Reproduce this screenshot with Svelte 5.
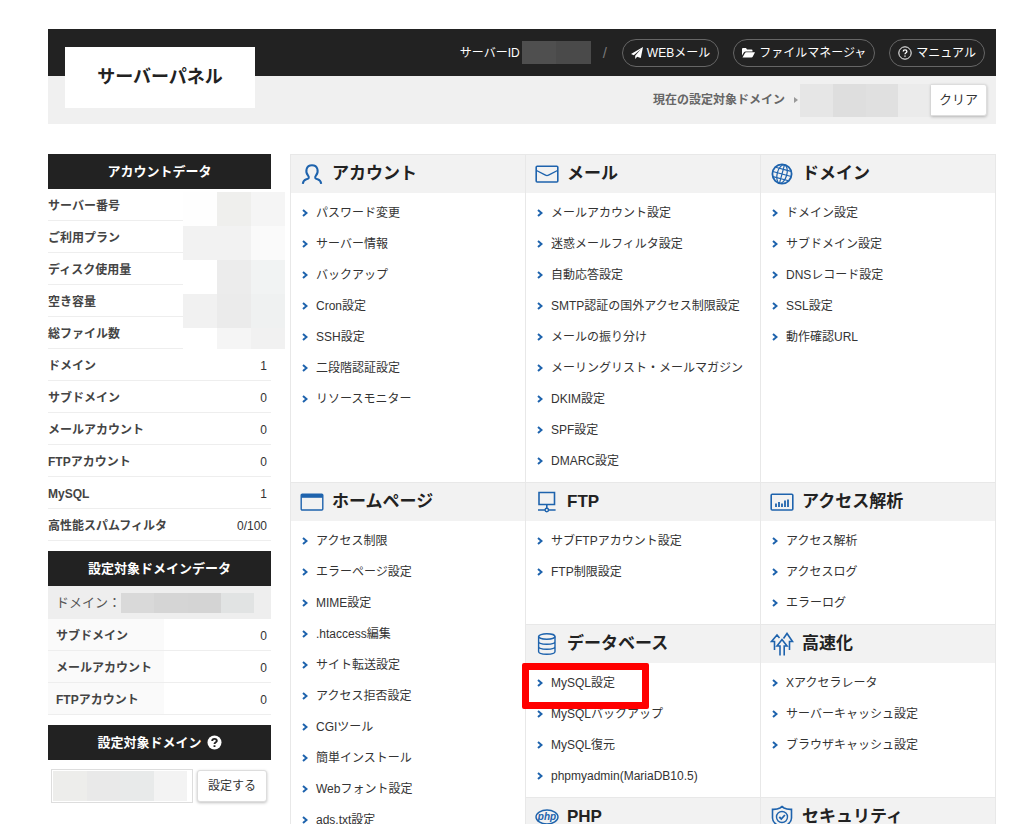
<script>
    const icons = {
        person: '<path d="M2.800 21.800c.3-2.600 1.300-3.800 3.600-4.500 2.400-.7 3.300-1.700 1.600-3.800C5 9.800 6 3.200 12 3.200s7 6.600 4 10.300c-1.700 2.100-.8 3.100 1.600 3.800 2.300.7 3.300 1.900 3.600 4.500" stroke-width="2"/>',
        mail: '<rect x="1.200" y="4.200" width="21.600" height="15.800" rx="1" stroke-width="1.600"/><path d="M1.500 8.500 10.500 13.200q1.500.8 3 0L22.500 8.500"/>',
        globe: '<circle cx="12" cy="12" r="9.600" stroke-width="1.800"/><g stroke-width="1.200" transform="rotate(15 12 12)"><ellipse cx="12" cy="12" rx="4.800" ry="9.500"/><path d="M12 2.500v19M2.500 12h19M4 7.200h16M4 16.800h16"/></g>',
        browser: '<rect x="1.200" y="4.200" width="21.600" height="15.800" rx="1"/><path d="M1.200 4.200h21.600v3.600H1.200z" fill="currentColor" stroke="none"/>',
        network: '<path d="M4 2.500h15.500v12H4zM11.800 14.500v4M3 20h7M13.600 20h7" stroke-width="1.600"/><circle cx="11.800" cy="20" r="1.700"/>',
        database: '<ellipse cx="11.800" cy="4.500" rx="8.200" ry="2.700"/><path d="M3.600 4.500v15c0 3.600 16.400 3.600 16.400 0v-15M3.600 9.500c0 3.600 16.400 3.600 16.400 0M3.600 14.500c0 3.600 16.400 3.600 16.400 0"/>',
        chart: '<rect x="1.200" y="4.200" width="21.600" height="15.800" rx="1" stroke-width="1.600"/><path d="M6 17v-3.500M9 17v-5M12 17v-3.500M15 17v-6.500M18 17v-7.500" stroke-width="1.800"/>',
        arrows: '<path d="M4.500 18V9.500H1.500L7 3l2.500 3M19.500 18V9.500h3L17 1.500l-3.500 5M10 23.500v-9.500H7L12 7.500l5 6.500h-2.800v9.500" stroke-width="1.600"/>',
        php: '<ellipse cx="12" cy="12" rx="11" ry="7"/><text x="12" y="15" text-anchor="middle" font-size="10" font-style="italic" font-weight="bold" fill="currentColor" stroke="none">php</text>',
        shield: '<path d="M12 1.500 14 3c2 1 4.500 1.500 7.500 1.300V13c0 4.500-4.500 7.500-9.500 9.500C7 20.500 2.500 17.500 2.500 13V4.300C5.500 4.500 8 4 10 3z" stroke-width="1.600"/><circle cx="12" cy="12" r="5.500"/><path d="m9.300 12 2 2 3.600-4" stroke-width="1.800"/>'
    };

    const accountData = [
        ['サーバー番号', ''],
        ['ご利用プラン', ''],
        ['ディスク使用量', ''],
        ['空き容量', ''],
        ['総ファイル数', ''],
        ['ドメイン', '1'],
        ['サブドメイン', '0'],
        ['メールアカウント', '0'],
        ['FTPアカウント', '0'],
        ['MySQL', '1'],
        ['高性能スパムフィルタ', '0/100']
    ];

    const domainData = [
        ['サブドメイン', '0'],
        ['メールアカウント', '0'],
        ['FTPアカウント', '0']
    ];

    const hiddenTiles = [
        '#fefefe', '#efefed', '#f5f5f5',
        '#f2f2f2', '#f2f2f2', '#fafafa',
        '#ffffff', '#ececec', '#f1f3f3',
        '#f1f1f1', '#ebebeb', '#eff1f1',
        '#ffffff', '#f5f5f5', '#f1f1f1'
    ];

    const panels = [
        { title: 'アカウント', icon: 'person', items: ['パスワード変更', 'サーバー情報', 'バックアップ', 'Cron設定', 'SSH設定', '二段階認証設定', 'リソースモニター'] },
        { title: 'メール', icon: 'mail', items: ['メールアカウント設定', '迷惑メールフィルタ設定', '自動応答設定', 'SMTP認証の国外アクセス制限設定', 'メールの振り分け', 'メーリングリスト・メールマガジン', 'DKIM設定', 'SPF設定', 'DMARC設定'] },
        { title: 'ドメイン', icon: 'globe', items: ['ドメイン設定', 'サブドメイン設定', 'DNSレコード設定', 'SSL設定', '動作確認URL'] },
        { title: 'ホームページ', icon: 'browser', tall: true, items: ['アクセス制限', 'エラーページ設定', 'MIME設定', '.htaccess編集', 'サイト転送設定', 'アクセス拒否設定', 'CGIツール', '簡単インストール', 'Webフォント設定', 'ads.txt設定'] },
        { title: 'FTP', icon: 'network', items: ['サブFTPアカウント設定', 'FTP制限設定'] },
        { title: 'アクセス解析', icon: 'chart', items: ['アクセス解析', 'アクセスログ', 'エラーログ'] },
        { title: 'データベース', icon: 'database', items: ['MySQL設定', 'MySQLバックアップ', 'MySQL復元', 'phpmyadmin(MariaDB10.5)'] },
        { title: '高速化', icon: 'arrows', items: ['Xアクセラレータ', 'サーバーキャッシュ設定', 'ブラウザキャッシュ設定'] },
        { title: 'PHP', icon: 'php', items: [] },
        { title: 'セキュリティ', icon: 'shield', items: [] }
    ];

    const marked = 'MySQL設定';
</script>

<div class="page">
    <header>
        <h1 class="logo">サーバーパネル</h1>
        <div class="topbar">
            <span class="server-id">サーバーID</span>
            <span class="mask id-mask"><i style="background: #4f4f4f"></i><i style="background: #4a4a4a"></i></span>
            <span class="slash">/</span>
            <nav>
                <a class="pill" href="#webmail">
                    <svg width="12" height="12" viewBox="0 0 12 12"><path d="M12 0 0 7l2.800 1.200L10 2 4.200 8.800V12l2-2.300L9.800 11z" fill="#fff" /></svg>
                    WEBメール
                </a>
                <a class="pill" href="#files">
                    <svg width="13" height="12" viewBox="0 0 13 12"><path d="M0 8.500V2q0-1 1-1h3l1 1.500h4.500q1 0 1 1v1H3.500q-1 0-1.500.8zM.5 10.500l2.500-4.500q.4-.7 1.200-.7H13l-2.300 4.500q-.4.7-1.200.7z" fill="#fff" /></svg>
                    ファイルマネージャ
                </a>
                <a class="pill" href="#manual">
                    <svg width="14" height="14" viewBox="0 0 14 14" fill="none" stroke="#fff"><circle cx="7" cy="7" r="6.200" /><path d="M5.200 5.600c0-2.300 3.700-2.300 3.700 0C8.900 6.800 7 6.900 7 8.300M7 9.400v1.400" stroke-width="1.300" /></svg>
                    マニュアル
                </a>
            </nav>
        </div>
        <div class="subbar">
            <span class="current">現在の設定対象ドメイン</span>
            <span class="arrow"></span>
            <span class="mask domain-mask">
                <i style="background: #e6e6e6"></i><i style="background: #dedede"></i><i style="background: #e0e0e0"></i><i style="background: #ebebeb"></i>
            </span>
            <button class="clear">クリア</button>
        </div>
    </header>

    <div class="content">
        <aside>
            <section class="account">
                <h2>アカウントデータ</h2>
                <table>
                    <tbody>
                        {#each accountData as [label, value]}
                        <tr><th scope="row">{label}</th><td>{value}</td></tr>
                        {/each}
                    </tbody>
                </table>
                <div class="tiles">
                    {#each hiddenTiles as color}
                    <i style="background: {color}"></i>
                    {/each}
                </div>
            </section>

            <section>
                <h2>設定対象ドメインデータ</h2>
                <p class="domain-name">
                    ドメイン：
                    <span class="mask name-mask">
                        <i style="background: #d9d9d9"></i><i style="background: #d5d5d5"></i><i style="background: #d4d4d4"></i><i style="background: #e1e3e3"></i>
                    </span>
                </p>
                <table class="shaded">
                    <tbody>
                        {#each domainData as [label, value]}
                        <tr><th scope="row">{label}</th><td>{value}</td></tr>
                        {/each}
                    </tbody>
                </table>
            </section>

            <section>
                <h2>
                    <label for="target">設定対象ドメイン</label>
                    <svg width="15" height="15" viewBox="0 0 15 15"><circle cx="7.500" cy="7.500" r="7" fill="#fff" /><path d="M5.200 6c0-2.900 4.600-2.900 4.600 0C9.800 7.300 7.500 7.300 7.500 9M7.500 10.200v1.900" fill="none" stroke="#222" stroke-width="1.900" /></svg>
                </h2>
                <form on:submit|preventDefault>
                    <div class="field">
                        <select id="target"><option></option></select>
                        <span class="mask field-mask">
                            <i style="background: #ededeb"></i><i style="background: #e9e9e9"></i><i style="background: #e8eaea"></i><i style="background: #f3f3f3"></i>
                        </span>
                    </div>
                    <button>設定する</button>
                </form>
            </section>
        </aside>

        <main>
            {#each panels as panel}
            <section class="panel" class:tall={panel.tall}>
                <h3>
                    <svg width="24" height="24" viewBox="0 0 24 24">{@html icons[panel.icon]}</svg>
                    {panel.title}
                </h3>
                <ul>
                    {#each panel.items as item}
                    <li class:marked={item == marked}>
                        <svg width="6" height="8" viewBox="0 0 6 8"><path d="m1 1 3.500 3L1 7" /></svg>
                        <a href="#{item}">{item}</a>
                    </li>
                    {/each}
                </ul>
            </section>
            {/each}
        </main>
    </div>
</div>

<style>
    :global(body) {
        margin: 0;
        height: 100vh;
        overflow: hidden;
        background: #fff;
    }

    .page {
        padding: 29px 28px 0 48px;
        font-family: "Liberation Sans", "Noto Sans CJK JP", sans-serif;
        font-size: 12px;
        color: #333;
    }

    h1, h2, h3, ul, p {
        margin: 0;
        padding: 0;
    }

    a {
        color: inherit;
        text-decoration: none;
    }

    button {
        height: 32px;
        box-sizing: border-box;
        border: 1px solid #ddd;
        border-radius: 3px;
        background: #fff;
        box-shadow: 0 1px 3px rgba(0, 0, 0, 0.25);
        color: #333;
        font: inherit;
        line-height: 18px;
        padding: 0;
        white-space: nowrap;
    }

    header {
        position: relative;
    }

    .logo {
        position: absolute;
        left: 17px;
        top: 18px;
        width: 190px;
        line-height: 61px;
        background: #fff;
        color: #222;
        text-align: center;
        font-size: 18px;
        font-weight: bold;
    }

    .topbar, .subbar {
        display: flex;
        align-items: center;
        justify-content: flex-end;
        box-sizing: border-box;
        line-height: 18px;
    }

    .topbar {
        height: 47px;
        padding-right: 11px;
        background: #222;
        color: #fff;
    }

    .subbar {
        height: 48px;
        padding-right: 9px;
        background: #f0f0f0;
    }

    .mask {
        display: flex;
    }

    .mask i {
        flex: 1;
    }

    .id-mask {
        width: 69px;
        height: 23px;
        margin-left: 2px;
    }

    .slash {
        margin: 0 15px 0 12px;
        color: #777;
        font-size: 15px;
    }

    nav {
        display: flex;
        gap: 14px;
    }

    .pill {
        display: flex;
        align-items: center;
        gap: 4px;
        height: 26px;
        padding: 0 8px;
        border: 1px solid #666;
        border-radius: 14px;
        white-space: nowrap;
    }

    .current {
        color: #666;
        font-weight: bold;
    }

    .arrow {
        margin: 0 2px 0 9px;
        border-left: 4px solid #999;
        border-top: 3px solid transparent;
        border-bottom: 3px solid transparent;
    }

    .domain-mask {
        width: 131px;
        height: 33px;
    }

    .clear {
        width: 56px;
        border-left: 0;
        border-radius: 0 3px 3px 0;
        font-size: 13px;
    }

    .content {
        display: flex;
        align-items: flex-start;
        gap: 19px;
        padding-top: 30px;
    }

    aside {
        flex: none;
        width: 223px;
    }

    aside section {
        margin-bottom: 10px;
    }

    .account {
        position: relative;
    }

    h2 {
        display: flex;
        align-items: center;
        justify-content: center;
        gap: 5px;
        height: 35px;
        background: #222;
        color: #fff;
        font-size: 13px;
        line-height: 18px;
    }

    table {
        width: 100%;
        border-collapse: separate;
        border-spacing: 0;
    }

    th, td {
        height: 29px;
        padding: 2px 0 0;
        border-bottom: 1px solid #eee;
        line-height: 18px;
    }

    th {
        text-align: left;
        color: #444;
    }

    td {
        text-align: right;
        padding-right: 4px;
    }

    .shaded th {
        width: 108px;
        padding-left: 8px;
        background: #fafafa;
    }

    .tiles {
        position: absolute;
        top: 38px;
        right: -14px;
        width: 102px;
        height: 157px;
        display: grid;
        grid-template-columns: repeat(3, 1fr);
        grid-template-rows: repeat(4, 34px) 1fr;
    }

    .domain-name {
        display: flex;
        align-items: center;
        height: 33px;
        padding-left: 8px;
        background: #eee;
        color: #555;
        font-size: 13px;
        line-height: 18px;
    }

    .name-mask {
        width: 133px;
        height: 20px;
    }

    form {
        display: flex;
        align-items: center;
        gap: 4px;
        padding: 9px 4px 0 3px;
    }

    .field {
        position: relative;
        flex: 1;
    }

    select {
        display: block;
        width: 100%;
        height: 34px;
        border: 1px solid #ddd;
        background: #fff;
        appearance: none;
    }

    .field-mask {
        position: absolute;
        inset: 2px 6px 2px 2px;
        pointer-events: none;
    }

    form button {
        width: 70px;
    }

    main {
        flex: 1;
        display: grid;
        grid-template-columns: repeat(3, 1fr);
        border-right: 1px solid #e8e8e8;
    }

    .panel {
        min-width: 0;
        border-left: 1px solid #e8e8e8;
        border-top: 1px solid #e8e8e8;
    }

    .tall {
        grid-row: span 3;
    }

    h3 {
        display: flex;
        align-items: center;
        gap: 8px;
        height: 38px;
        padding-left: 9px;
        background: #f2f2f2;
        color: #222;
        font-size: 17px;
        line-height: 24px;
    }

    h3 svg, li svg {
        flex: none;
        fill: none;
        stroke: #1e63ad;
        color: #1e63ad;
        stroke-width: 1.4;
    }

    ul {
        list-style: none;
        padding: 4px 0 6px;
    }

    li {
        position: relative;
        display: flex;
        align-items: center;
        gap: 8px;
        height: 31px;
        padding-left: 11px;
        line-height: 18px;
        white-space: nowrap;
    }

    li svg {
        stroke-width: 2;
    }

    .marked::after {
        content: "";
        position: absolute;
        z-index: 1;
        left: -4px;
        top: -4px;
        width: 113px;
        height: 32px;
        border: 7px solid #f00;
        border-radius: 2px;
        pointer-events: none;
    }
</style>
